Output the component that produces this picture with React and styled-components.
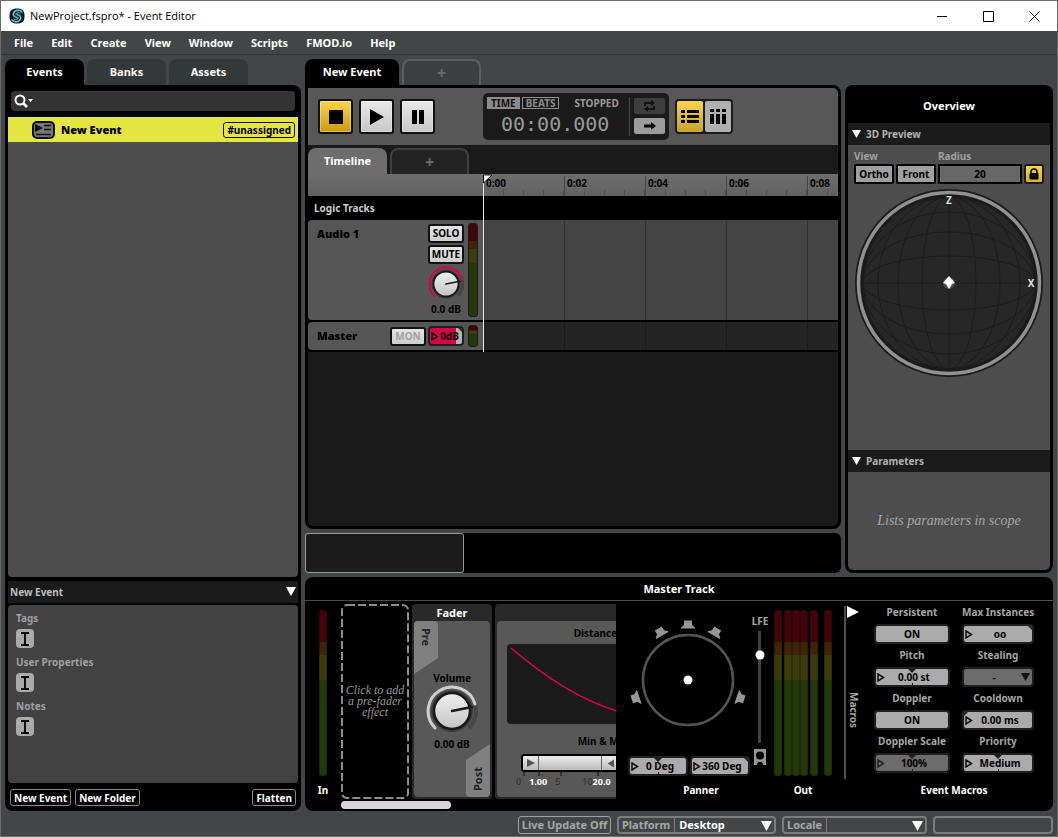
import { useState } from "react"
import styled, { createGlobalStyle, css } from "styled-components"

const TICK = 81
const meters = [0, 2, 0, 0, 2, 6]
const times = ["0:00", "0:02", "0:04", "0:06", "0:08"]
const speakers = [0, -30, 30, -109, 109]

function Knob({ size, color }) {
  return (
    <svg width={size} height={size} viewBox="-26 -26 52 52" role="img" aria-label="Volume knob">
      <defs>
        <linearGradient id="dial" x1="0" y1="0" x2="0" y2="1">
          <stop offset="0" stopColor="#f0f0f0" />
          <stop offset="1" stopColor="#c4c4c4" />
        </linearGradient>
      </defs>
      <path d="M17 17A24 24 0 0 0 23 -7" fill="none" stroke="#454545" strokeWidth="4" />
      <path d="M-17 17A24 24 0 1 1 23 -7" fill="none" stroke={color} strokeWidth="3" strokeLinecap="round" />
      <circle r="21" fill="#3c3c3c" />
      <circle r="18" fill="url(#dial)" stroke="#191919" strokeWidth="2.5" />
      <path d="M0 0L20 -4" stroke="#191919" strokeWidth="2.5" strokeLinecap="round" />
    </svg>
  )
}

function Triangle({ dir = "down", color = "#fff", size = 9 }) {
  const points = dir === "down" ? "0,0 10,0 5,9" : "0,0 10,5 0,10"
  return (
    <svg width={size} height={size} viewBox="0 0 10 10" aria-hidden="true">
      <polygon points={points} fill={color} />
    </svg>
  )
}

function DragField({ label, value, center, corner, level, dim, width, hideLabel }) {
  return (
    <FieldLabel $width={width}>
      {!hideLabel && <span>{label}</span>}
      <FieldBox $dim={dim} $level={level}>
        <svg width="8" height="9" viewBox="0 0 8 9" aria-hidden="true">
          <path d="M1 1L6.500 4.500L1 8Z" fill="none" stroke={dim ? "#222" : "#111"} strokeWidth="1.500" />
        </svg>
        <input aria-label={label} defaultValue={value} />
        {center && <Notch />}
        {corner && <Corner $side={corner} />}
      </FieldBox>
    </FieldLabel>
  )
}

function Sphere() {
  return (
    <SphereSvg viewBox="-95 -95 190 190" role="img" aria-label="3D preview">
      <circle r="94" fill="#1b1b1b" />
      <circle r="90.500" fill="#1b1b1b" stroke="#919191" strokeWidth="3.500" />
      <circle r="86" fill="#272727" />
      <g fill="none" stroke="#1c1c1c" strokeWidth="1">
        {[27, 51, 71, 86].map(r => (
          <g key={r}>
            <ellipse rx={r} ry="86" />
            <ellipse rx="86" ry={r} />
          </g>
        ))}
        <path d="M0 -86V86M-86 0H86" />
      </g>
      <circle r="6" fill="#4a4a4a" />
      <path d="M0 -7L6 0L3 1L0 6L-3 1L-6 0Z" fill="#fff" />
      <text x="0" y="-79" textAnchor="middle">Z</text>
      <text x="82" y="4" textAnchor="middle">X</text>
    </SphereSvg>
  )
}

function TitleBar() {
  return (
    <Title>
      <svg width="16" height="16" viewBox="0 0 16 16" aria-hidden="true">
        <rect x="0.500" y="0.500" width="15" height="15" rx="6" fill="#0c1a20" />
        <g fill="none" strokeWidth="1.500" strokeLinecap="round">
          <path d="M13 4C11 1.500 6 1.500 4.500 5C3.500 8 6 9 8 9.500" stroke="#5fc8e6" />
          <path d="M3 12C5 14.500 10 14.500 11.500 11C12.500 8 10 7 8 6.500" stroke="#5fc8e6" />
          <path d="M11 5C9.500 4 7.500 4.500 7 6.500M5 11C6.500 12 8.500 11.500 9 9.500" stroke="#2f93ad" />
        </g>
      </svg>
      <h1>NewProject.fspro* - Event Editor</h1>
      <WindowButton aria-label="Minimize"><svg width="11" height="11"><path d="M0 5.500H10" /></svg></WindowButton>
      <WindowButton aria-label="Maximize"><svg width="11" height="11"><path d="M.5 .5H10.500V10.500H.5Z" /></svg></WindowButton>
      <WindowButton aria-label="Close"><svg width="11" height="11"><path d="M.5 .5L10.500 10.500M10.500 .5L.5 10.500" /></svg></WindowButton>
    </Title>
  )
}

function Browser() {
  return (
    <BrowserColumn>
      <Tabs>
        <Tab $active>Events</Tab>
        <Tab>Banks</Tab>
        <Tab>Assets</Tab>
      </Tabs>
      <BrowserPanel>
        <Search>
          <svg width="20" height="14" viewBox="0 0 20 14" aria-hidden="true">
            <circle cx="6" cy="6" r="4.500" fill="none" stroke="#fff" strokeWidth="2" />
            <path d="M9.500 9.500L13 13" stroke="#fff" strokeWidth="2.500" />
            <path d="M14 5H19L16.500 8Z" fill="#fff" />
          </svg>
          <input aria-label="Search events" />
        </Search>
        <EventList>
          <EventRow>
            <svg width="23" height="18" viewBox="0 0 23 18" aria-hidden="true">
              <rect x="1" y="1" width="21" height="16" rx="4" fill="#777" stroke="#111" strokeWidth="2" />
              <path d="M3 3L11 7L3 11Z" fill="#111" />
              <path d="M12 4.500H19M12 8.500H19M4 13.500H19" stroke="#111" strokeWidth="1.500" />
            </svg>
            <strong>New Event</strong>
            <Tag>#unassigned</Tag>
          </EventRow>
        </EventList>
        <DetailsHeader>
          <span>New Event</span>
          <Triangle size={10} />
        </DetailsHeader>
        <Details>
          {["Tags", "User Properties", "Notes"].map(name => (
            <div key={name}>
              <span>{name}</span>
              <button aria-label={"Edit " + name}>
                <svg width="10" height="14" viewBox="0 0 10 14" aria-hidden="true">
                  <path d="M1 1H4L5 2L6 1H9M5 2V12M1 13H4L5 12L6 13H9" fill="none" stroke="#000" strokeWidth="1.800" />
                </svg>
              </button>
            </div>
          ))}
        </Details>
        <BrowserFooter>
          <OutlineButton>New Event</OutlineButton>
          <OutlineButton>New Folder</OutlineButton>
          <OutlineButton>Flatten</OutlineButton>
        </BrowserFooter>
      </BrowserPanel>
    </BrowserColumn>
  )
}

function Transport() {
  return (
    <Toolbar>
      <Buttons>
        <TransportButton $on aria-label="Stop"><svg width="14" height="14"><rect width="14" height="14" /></svg></TransportButton>
        <TransportButton aria-label="Play"><svg width="14" height="16"><path d="M0 0L14 8L0 16Z" /></svg></TransportButton>
        <TransportButton aria-label="Pause"><svg width="12" height="14"><path d="M0 0H5V14H0ZM7 0H12V14H7Z" /></svg></TransportButton>
      </Buttons>
      <Display>
        <Readout>
          <div>
            <Mode $on>TIME</Mode>
            <Mode>BEATS</Mode>
            <span>STOPPED</span>
          </div>
          <time>00:00.000</time>
        </Readout>
        <LoopButtons>
          <LoopButton aria-label="Loop">
            <svg width="13" height="12" viewBox="0 0 13 12">
              <path d="M2 6V3H9M11 6V9H4" fill="none" stroke="#111" strokeWidth="2" />
              <path d="M8 0L12 3L8 6ZM5 6L1 9L5 12Z" fill="#111" />
            </svg>
          </LoopButton>
          <LoopButton $on aria-label="Follow playhead">
            <svg width="12" height="8" viewBox="0 0 12 8"><path d="M0 2.500H7V0L12 4L7 8V5.500H0Z" /></svg>
          </LoopButton>
        </LoopButtons>
      </Display>
      <ViewToggle>
        <ViewButton $on aria-label="Track view">
          <svg width="18" height="13"><path d="M0 0H4V3H0ZM6 0H18V3H6ZM0 5H4V8H0ZM6 5H18V8H6ZM0 10H4V13H0ZM6 10H18V13H6Z" /></svg>
        </ViewButton>
        <ViewButton aria-label="Mixer view">
          <svg width="16" height="15"><path d="M0 0H4V3H0ZM6 0H10V3H6ZM12 0H16V3H12ZM0 5H4V15H0ZM6 5H10V15H6ZM12 5H16V15H12Z" /></svg>
        </ViewButton>
      </ViewToggle>
    </Toolbar>
  )
}

function Editor() {
  return (
    <EditorColumn>
      <Tabs>
        <Tab $active $wide>New Event</Tab>
        <AddTab aria-label="Add event tab">+</AddTab>
      </Tabs>
      <EditorPanel>
        <Transport />
        <SheetTabs>
          <SheetTab>Timeline</SheetTab>
          <AddTab $dark aria-label="Add sheet">+</AddTab>
        </SheetTabs>
        <TrackArea>
          <Playhead aria-hidden="true" />
          <PlayheadFlag width="10" height="10" aria-hidden="true"><path d="M.5 1H9L.5 9Z" fill="#fff" stroke="#111" /></PlayheadFlag>
          <RulerRow>
            <Ruler>{times.map(t => <span key={t}>{t}</span>)}</Ruler>
          </RulerRow>
          <LogicRow>Logic Tracks</LogicRow>
          <TrackRow>
            <TrackHead>
              <strong>Audio 1</strong>
              <TrackControls>
                <SmallButton>SOLO</SmallButton>
                <SmallButton>MUTE</SmallButton>
                <Knob size={36} color="#dc0046" />
                <span>0.0 dB</span>
              </TrackControls>
              <TrackMeter $height={94} />
            </TrackHead>
            <Lane />
          </TrackRow>
          <TrackRow>
            <TrackHead $master>
              <strong>Master</strong>
              <SmallButton disabled>MON</SmallButton>
              <DragField label="Master volume" value="0dB" corner="right" level width={36} hideLabel />
              <TrackMeter $height={22} />
            </TrackHead>
            <Lane $dark />
          </TrackRow>
        </TrackArea>
      </EditorPanel>
      <Minimap><div /></Minimap>
    </EditorColumn>
  )
}

function Overview() {
  return (
    <OverviewPanel>
      <h2>Overview</h2>
      <SectionHeader><Triangle />3D Preview</SectionHeader>
      <Preview>
        <PreviewControls>
          <div>
            <span>View</span>
            <ViewChoice>Ortho</ViewChoice>
            <ViewChoice>Front</ViewChoice>
          </div>
          <label>
            <span>Radius</span>
            <input defaultValue="20" />
          </label>
          <LockButton aria-label="Lock radius">
            <svg width="10" height="12" viewBox="0 0 10 12">
              <path d="M2 6V4A3 3 0 0 1 8 4V6" fill="none" stroke="#000" strokeWidth="1.600" />
              <rect x="0.500" y="5" width="9" height="6.500" rx="1" />
            </svg>
          </LockButton>
        </PreviewControls>
        <Sphere />
      </Preview>
      <SectionHeader><Triangle />Parameters</SectionHeader>
      <Parameters>Lists parameters in scope</Parameters>
    </OverviewPanel>
  )
}

function Modules() {
  return (
    <ModuleScroller>
      <ModuleList>
        <DropZone>
          <svg aria-hidden="true"><rect x="1" y="1" rx="5" /></svg>
          Click to add a pre-fader effect
        </DropZone>
        <Module>
          <h3>Fader</h3>
          <FaderBody>
            <PreTab>Pre</PreTab>
            <FaderDial>
              <span>Volume</span>
              <Knob size={52} color="#cfcfcf" />
              <span>0.00 dB</span>
            </FaderDial>
            <PostTab><span>Post</span></PostTab>
          </FaderBody>
        </Module>
        <Module $wide>
          <h3>&nbsp;</h3>
          <SpatialBody>
            <span>Distance Attenuation</span>
            <svg width="240" height="80" aria-hidden="true">
              <rect width="240" height="80" rx="4" fill="#1b1b1b" />
              <path d="M4 4Q60 52 110 67T236 78" fill="none" stroke="#e60050" strokeWidth="1.500" />
            </svg>
            <span>Min &amp; Max Distance</span>
            <RangeBar>
              <i><Triangle dir="right" size={8} color="#555" /></i>
              <b />
              <i><svg width="8" height="9" viewBox="0 0 10 10"><polygon points="10,0 10,10 2,5" fill="#555" /></svg></i>
              <b />
            </RangeBar>
            <ScaleTicks width="210" height="4" aria-hidden="true">
              <path d="M2 0V4M17 0V4M39 0V4M76 0V4" stroke="#333" strokeWidth="2" />
            </ScaleTicks>
            <Scale>
              <span>0</span><em>1.00</em><span>5</span><span>10</span><em>20.0</em>
            </Scale>
          </SpatialBody>
        </Module>
      </ModuleList>
      <Scrollbar />
    </ModuleScroller>
  )
}

function Panner() {
  return (
    <PannerColumn>
      <PannerTop>
        <svg width="120" height="128" viewBox="-60 -64 120 128" role="img" aria-label="Surround panner">
          <circle r="45" fill="none" stroke="#545454" strokeWidth="2.500" />
          <circle r="4.500" fill="#fff" />
          {speakers.map(a => (
            <path key={a} transform={`rotate(${a})`} d="M-4 -59.500H4V-55L7 -52.500V-51.500H-7V-52.500L-4 -55Z" fill="#969696" />
          ))}
        </svg>
        <Lfe>
          <span>LFE</span>
          <svg width="14" height="138" viewBox="0 0 14 138" aria-hidden="true">
            <path d="M6.500 4V116" stroke="#424242" strokeWidth="3" />
            <circle cx="7" cy="28" r="4.500" fill="#fff" />
            <path d="M1 122H13V138H10L9 135H5L4 138H1Z" fill="#969696" />
            <circle cx="7" cy="128.500" r="4" fill="#000" />
          </svg>
        </Lfe>
      </PannerTop>
      <PannerFields>
        <DragField label="Direction" value="0 Deg" center width={60} hideLabel />
        <DragField label="Extent" value="360 Deg" corner="right" width={60} hideLabel />
      </PannerFields>
      <Caption>Panner</Caption>
    </PannerColumn>
  )
}

function Macros() {
  const [persistent, setPersistent] = useState(true)
  const [doppler, setDoppler] = useState(true)

  return (
    <MacroColumn>
      <MacroToggle aria-label="Collapse macros">
        <Triangle dir="right" size={12} />
        <span>Macros</span>
      </MacroToggle>
      <div>
        <MacroGrid>
          <FieldLabel>
            <span>Persistent</span>
            <ToggleButton onClick={() => setPersistent(!persistent)}>{persistent ? "ON" : "OFF"}</ToggleButton>
          </FieldLabel>
          <DragField label="Max Instances" value="oo" corner="right" />
          <DragField label="Pitch" value="0.00 st" center />
          <FieldLabel>
            <span>Stealing</span>
            <SelectBox>
              <select><option>-</option></select>
              <Triangle color="#111" />
            </SelectBox>
          </FieldLabel>
          <FieldLabel>
            <span>Doppler</span>
            <ToggleButton onClick={() => setDoppler(!doppler)}>{doppler ? "ON" : "OFF"}</ToggleButton>
          </FieldLabel>
          <DragField label="Cooldown" value="0.00 ms" corner="left" />
          <DragField label="Doppler Scale" value="100%" center dim />
          <DragField label="Priority" value="Medium" center />
        </MacroGrid>
        <Caption>Event Macros</Caption>
      </div>
    </MacroColumn>
  )
}

export default function App() {
  return (
    <Window>
      <GlobalStyle />
      <TitleBar />
      <Menu>
        {["File", "Edit", "Create", "View", "Window", "Scripts", "FMOD.io", "Help"].map(item => (
          <button key={item}>{item}</button>
        ))}
      </Menu>
      <Body>
        <Browser />
        <MainColumn>
          <TopRow>
            <Editor />
            <Overview />
          </TopRow>
          <Dock>
            <h2>Master Track</h2>
            <DockBody>
              <InColumn>
                <Meter />
                <Caption>In</Caption>
              </InColumn>
              <Modules />
              <Panner />
              <OutColumn>
                <div>{meters.map((gap, i) => <Meter key={i} $gap={gap} />)}</div>
                <Caption>Out</Caption>
              </OutColumn>
              <Macros />
            </DockBody>
          </Dock>
        </MainColumn>
      </Body>
      <StatusBar>
        <LiveButton>Live Update Off</LiveButton>
        <StatusSelect $width={159}>
          <span>Platform</span>
          <select><option>Desktop</option></select>
          <Triangle size={11} />
        </StatusSelect>
        <StatusSelect $width={145}>
          <span>Locale</span>
          <select><option></option></select>
          <Triangle size={11} />
        </StatusSelect>
        <StatusBox />
      </StatusBar>
    </Window>
  )
}

const GlobalStyle = createGlobalStyle`
  * {
    box-sizing: border-box;
  }
  body {
    margin: 0;
  }
  body, button, input, select {
    font: bold 10px/14px "Noto Sans", sans-serif;
  }
  button, input, select {
    margin: 0;
    padding: 0;
    border: 0;
    border-radius: 0;
    color: inherit;
    background: none;
    appearance: none;
    min-width: 0;
    outline: none;
  }
  h1, h2, h3 {
    margin: 0;
  }
  svg {
    display: block;
    flex-shrink: 0;
  }
`
const Window = styled.div`
  display: flex;
  flex-direction: column;
  min-height: 100vh;
  border: 1px solid #6b6b6b;
  background: #434646;
  color: #fff;
`
const Title = styled.header`
  display: flex;
  align-items: center;
  height: 30px;
  padding-left: 8px;
  background: #fff;
  color: #000;
  h1 {
    flex: 1;
    margin-left: 5px;
    font: 11px/16px "Open Sans", sans-serif;
  }
`
const WindowButton = styled.button`
  display: flex;
  align-items: center;
  justify-content: center;
  width: 46px;
  height: 30px;
  path {
    fill: none;
    stroke: #000;
  }
`
const Menu = styled.nav`
  display: flex;
  gap: 18px;
  height: 24px;
  padding: 0 13px;
  border-bottom: 1px solid #303333;
  button {
    font-size: 11px;
  }
`
const Body = styled.main`
  flex: 1;
  display: flex;
  gap: 4px;
  padding: 4px 4px 0;
`
const BrowserColumn = styled.section`
  display: flex;
  flex-direction: column;
  width: 296px;
  flex-shrink: 0;
`
const Tabs = styled.div`
  display: flex;
  gap: 3px;
  height: 26px;
`
const Tab = styled.button`
  width: ${(props) => (props.$wide ? 94 : 79)}px;
  border-radius: 8px 8px 0 0;
  font-size: 11px;
  background: ${(props) => (props.$active ? "#000" : "#353838")};
`
const AddTab = styled.button`
  width: 79px;
  border: 2px solid ${(props) => (props.$dark ? "#404040" : "#5c5f5f")};
  border-bottom: 0;
  border-radius: 8px 8px 0 0;
  background: ${(props) => (props.$dark ? "#232323" : "#3c3f3f")};
  color: #6c6c6c;
  font-size: 16px;
`
const BrowserPanel = styled.div`
  flex: 1;
  display: flex;
  flex-direction: column;
  padding: 3px;
  border-radius: 0 8px 8px 8px;
  background: #000;
`
const Search = styled.div`
  display: flex;
  align-items: center;
  height: 20px;
  margin: 3px 3px 6px;
  padding: 0 3px;
  border-radius: 4px;
  background: #333;
  input {
    flex: 1;
  }
`
const EventList = styled.div`
  flex: 1;
  border-radius: 0 0 4px 4px;
  background: #4d4d4d;
`
const EventRow = styled.div`
  display: flex;
  align-items: center;
  gap: 6px;
  height: 25px;
  padding: 0 3px 0 24px;
  background: #e6e642;
  color: #000;
  strong {
    flex: 1;
    font-size: 11px;
  }
`
const Tag = styled.span`
  padding: 0 3px;
  border: 1px solid #111;
  border-radius: 3px;
`
const DetailsHeader = styled.div`
  display: flex;
  align-items: center;
  justify-content: space-between;
  height: 22px;
  margin: 4px 0 2px;
  padding: 0 2px;
  background: #1b1b1b;
  color: #bdbdbd;
`
const Details = styled.div`
  display: flex;
  flex-direction: column;
  gap: 7px;
  height: 178px;
  padding: 6px 8px;
  border-radius: 4px;
  background: #424242;
  color: #a0a0a0;
  div {
    display: flex;
    flex-direction: column;
    gap: 4px;
  }
  button {
    display: flex;
    align-items: center;
    justify-content: center;
    width: 18px;
    height: 19px;
    border-radius: 4px;
    background: #aaa;
  }
`
const BrowserFooter = styled.div`
  display: flex;
  gap: 4px;
  padding: 6px 2px 2px;
  button:last-child {
    margin-left: auto;
  }
`
const OutlineButton = styled.button`
  height: 17px;
  padding: 0 3px;
  border: 1px solid #8a8a8a;
  border-radius: 3px;
`
const MainColumn = styled.div`
  flex: 1;
  min-width: 0;
  display: flex;
  flex-direction: column;
  gap: 4px;
`
const TopRow = styled.div`
  flex: 1;
  display: flex;
  gap: 4px;
`
const EditorColumn = styled.section`
  flex: 1;
  min-width: 0;
  display: flex;
  flex-direction: column;
`
const EditorPanel = styled.div`
  flex: 1;
  display: flex;
  flex-direction: column;
  border: 3px solid #000;
  border-radius: 0 8px 8px 8px;
  background: #1a1a1a;
  overflow: hidden;
`
const Toolbar = styled.div`
  display: flex;
  align-items: center;
  height: 57px;
  padding-left: 10px;
  background: #575757;
`
const Buttons = styled.div`
  display: flex;
  gap: 6px;
  width: 165px;
`
const TransportButton = styled.button`
  display: flex;
  align-items: center;
  justify-content: center;
  width: 35px;
  height: 35px;
  border: 2px solid #111;
  border-radius: 3px;
  box-shadow: inset 0 0 0 1px #ffffff50;
  background: ${(props) => (props.$on ? "linear-gradient(#fbd34c, #c99e0c)" : "linear-gradient(#e8e8e8, #c8c8c8)")};
`
const Display = styled.div`
  display: flex;
  height: 47px;
  padding: 4px;
  border-radius: 5px;
  background: #1b1b1b;
  color: #9a9a9a;
`
const Readout = styled.div`
  width: 143px;
  border-right: 1px solid #4a4a4a;
  div {
    display: flex;
    gap: 2px;
    line-height: 12px;
  }
  div span:last-child {
    margin-left: 13px;
  }
  time {
    display: block;
    margin-left: 14px;
    font: 20px/30px "DejaVu Sans Mono", monospace;
  }
`
const Mode = styled.button`
  height: 12px;
  padding: 0 3px;
  border: 1px solid #8c8c8c;
  line-height: 10px;
  background: ${(props) => (props.$on ? "#8c8c8c" : "none")};
  color: ${(props) => (props.$on ? "#111" : "#8c8c8c")};
`
const LoopButtons = styled.div`
  display: flex;
  flex-direction: column;
  gap: 4px;
  padding: 1px 0 0 4px;
`
const LoopButton = styled.button`
  display: flex;
  align-items: center;
  justify-content: center;
  width: 31px;
  height: 16px;
  border-radius: 2px;
  background: ${(props) => (props.$on ? "#9c9c9c" : "#3e3e3e")};
`
const ViewToggle = styled.div`
  display: flex;
  gap: 2px;
  margin-left: 6px;
  padding: 2px;
  border-radius: 4px;
  background: #1b1b1b;
`
const ViewButton = styled.button`
  display: flex;
  align-items: center;
  justify-content: center;
  width: 26px;
  height: 31px;
  border-radius: 2px;
  background: ${(props) => (props.$on ? "linear-gradient(#fbd34c, #c9a22c)" : "#b0b0b0")};
`
const SheetTabs = styled.div`
  display: flex;
  gap: 3px;
  height: 29px;
  padding-top: 3px;
`
const SheetTab = styled.button`
  width: 79px;
  border-radius: 8px 8px 0 0;
  background: #6d6d6d;
  font-size: 11px;
`
const TrackArea = styled.div`
  position: relative;
  background: #000;
`
const Playhead = styled.div`
  position: absolute;
  top: 2px;
  bottom: 0;
  left: 175px;
  width: 1px;
  background: #e6e6e6;
`
const PlayheadFlag = styled.svg`
  position: absolute;
  top: 0;
  left: 175px;
`
const RulerRow = styled.div`
  height: 22px;
  padding-left: 175px;
  background: linear-gradient(#6d6d6d, #626262);
`
const Ruler = styled.div`
  display: flex;
  height: 22px;
  padding-top: 2px;
  overflow: hidden;
  color: #000;
  background:
    repeating-linear-gradient(90deg, #444 0 1px, transparent 1px ${TICK}px) 0 2px / 100% 22px no-repeat,
    repeating-linear-gradient(90deg, #505050 0 1px, transparent 1px 20px) 0 16px / ${TICK}px 6px repeat-x;
  span {
    flex: 0 0 ${TICK}px;
    padding-left: 3px;
  }
`
const LogicRow = styled.div`
  height: 24px;
  padding: 5px 6px;
  color: #ccc;
`
const TrackRow = styled.div`
  display: flex;
  padding-bottom: 2px;
`
const TrackHead = styled.div`
  display: flex;
  gap: ${(props) => (props.$master ? 2 : 4)}px;
  width: 175px;
  padding: 3px 5px 3px 9px;
  align-items: ${(props) => (props.$master ? "center" : "flex-start")};
  border-radius: 4px 0 0 4px;
  background: #565656;
  color: #000;
  > div:last-child {
    margin-left: ${(props) => (props.$master ? 2 : 0)}px;
  }
  strong {
    flex: 1;
    font-size: 11px;
    line-height: 22px;
  }
`
const TrackControls = styled.div`
  display: flex;
  flex-direction: column;
  align-items: center;
  gap: 2px;
  width: 36px;
  padding-top: 1px;
  white-space: nowrap;
  line-height: 10px;
`
const SmallButton = styled.button`
  width: 36px;
  height: 19px;
  flex-shrink: 0;
  border: 2px solid #111;
  border-radius: 3px;
  background: linear-gradient(#e6e6e6, #cdcdcd);
  color: #000;
  line-height: 13px;
  &:disabled {
    color: #a2a2a2;
  }
`
const meterColors = css`
  background: linear-gradient(#42060a 19%, #402408 19% 27%, #3c3c08 27% 42%, #213a08 42%);
`
const TrackMeter = styled.div`
  width: 10px;
  height: ${(props) => props.$height}px;
  flex-shrink: 0;
  border: 1px solid #1b1b1b;
  border-radius: 3px;
  ${meterColors}
`
const Lane = styled.div`
  flex: 1;
  background:
    repeating-linear-gradient(90deg, ${(props) => (props.$dark ? "#1b1b1b" : "#303030")} 0 1px, transparent 1px ${TICK}px),
    ${(props) => (props.$dark ? "#242424" : "#444")};
`
const Minimap = styled.div`
  height: 40px;
  margin-top: 4px;
  border-radius: 6px;
  background: #000;
  div {
    width: 159px;
    height: 100%;
    border: 1px solid #9a9a9a;
    border-radius: 3px;
    background: #1b1b1b;
  }
`
const OverviewPanel = styled.aside`
  display: flex;
  flex-direction: column;
  width: 208px;
  margin-top: 26px;
  padding: 0 3px 3px;
  border-radius: 8px;
  background: #000;
  h2 {
    height: 38px;
    font-size: 11px;
    line-height: 42px;
    text-align: center;
  }
`
const SectionHeader = styled.h3`
  display: flex;
  align-items: center;
  gap: 5px;
  height: 22px;
  padding-left: 4px;
  background: #1b1b1b;
  color: #b2b2b2;
  font-size: 10px;
`
const Preview = styled.div`
  flex: 1;
  padding: 4px 6px;
  background: #4d4d4d;
`
const PreviewControls = styled.div`
  display: flex;
  align-items: flex-end;
  gap: 2px;
  color: #a0a0a0;
  div {
    display: grid;
    grid-template-columns: 40px 40px;
    gap: 1px 2px;
  }
  div > span {
    grid-column: span 2;
  }
  label {
    display: flex;
    flex-direction: column;
    gap: 1px;
    flex: 1;
    min-width: 0;
  }
  input {
    width: 100%;
    height: 20px;
    border: 2px solid #000;
    background: #686868;
    color: #000;
    text-align: center;
  }
`
const ViewChoice = styled.button`
  height: 20px;
  border: 2px solid #000;
  border-radius: 2px;
  background: #a0a0a0;
  color: #000;
`
const LockButton = styled.button`
  display: flex;
  align-items: center;
  justify-content: center;
  width: 20px;
  height: 20px;
  border: 2px solid #1b1b1b;
  border-radius: 3px;
  background: linear-gradient(#fbd34c, #d9b02c);
`
const SphereSvg = styled.svg`
  width: 190px;
  height: 190px;
  margin: 4px auto 0;
  fill: #ddd;
`
const Parameters = styled.div`
  display: flex;
  align-items: center;
  justify-content: center;
  height: 98px;
  border-radius: 0 0 5px 5px;
  background: #4d4d4d;
  color: #a6a6a6;
  font: italic 14px/18px "Liberation Serif", serif;
`
const Dock = styled.section`
  border-radius: 8px;
  background: #000;
  h2 {
    height: 24px;
    border-bottom: 1px solid #4a4a4a;
    font-size: 11px;
    line-height: 24px;
    text-align: center;
  }
`
const DockBody = styled.div`
  display: flex;
  height: 210px;
`
const Caption = styled.div`
  line-height: 14px;
  text-align: center;
`
const Meter = styled.div`
  width: 8px;
  height: 166px;
  margin-left: ${(props) => props.$gap || 0}px;
  border-radius: 3px;
  box-shadow: inset 0 0 0 1px #00000040;
  ${meterColors}
`
const InColumn = styled.div`
  display: flex;
  flex-direction: column;
  align-items: center;
  gap: 7px;
  width: 36px;
  padding-top: 9px;
`
const ModuleScroller = styled.div`
  flex: 1;
  min-width: 0;
  padding-top: 3px;
  overflow: hidden;
`
const ModuleList = styled.div`
  display: flex;
  gap: 3px;
  height: 195px;
`
const Scrollbar = styled.div`
  width: 110px;
  height: 8px;
  margin-top: 2px;
  border-radius: 4px;
  background: #d6d6d6;
`
const DropZone = styled.button`
  position: relative;
  flex: 0 0 68px;
  padding: 0 2px;
  color: #969696;
  font: italic 12px/11px "Liberation Serif", serif;
  svg {
    position: absolute;
    inset: 0;
    width: 100%;
    height: 100%;
  }
  rect {
    width: calc(100% - 2px);
    height: calc(100% - 2px);
    fill: none;
    stroke: #8c8c8c;
    stroke-width: 2;
    stroke-dasharray: 8 3;
  }
`
const Module = styled.div`
  display: flex;
  flex-direction: column;
  flex: 0 0 ${(props) => (props.$wide ? 264 : 80)}px;
  padding: 0 2px 2px;
  border-radius: 4px;
  background: #292929;
  h3 {
    font-size: 11px;
    line-height: 17px;
    text-align: center;
  }
`
const FaderBody = styled.div`
  flex: 1;
  display: flex;
  flex-direction: column;
  justify-content: space-between;
  border-radius: 4px;
  background: #585858;
  color: #000;
`
const PreTab = styled.button`
  width: 24px;
  height: 53px;
  padding: 7px 5px;
  border-radius: 4px 4px 0 0;
  background: #808080;
  clip-path: polygon(0 0, 100% 0, 100% 70%, 0 100%);
  color: #222;
  font-size: 11px;
  text-align: left;
  writing-mode: vertical-rl;
`
const PostTab = styled.button`
  align-self: flex-end;
  width: 24px;
  height: 53px;
  padding: 6px 5px;
  border-radius: 0 0 4px 4px;
  background: #808080;
  clip-path: polygon(0 30%, 100% 0, 100% 100%, 0 100%);
  color: #222;
  font-size: 11px;
  text-align: right;
  writing-mode: vertical-rl;
  span {
    display: inline-block;
    transform: rotate(180deg);
  }
`
const FaderDial = styled.div`
  display: flex;
  flex-direction: column;
  align-items: center;
  margin: -6px 0 -9px;
`
const SpatialBody = styled.div`
  flex: 1;
  display: flex;
  flex-direction: column;
  align-items: center;
  padding-top: 5px;
  border-radius: 4px;
  background: #585858;
  color: #000;
  > svg {
    margin: 4px 0 10px;
  }
`
const RangeBar = styled.div`
  display: flex;
  width: 212px;
  height: 18px;
  margin-top: 6px;
  border: 2px solid #000;
  border-radius: 3px;
  background: linear-gradient(#eee, #bbb);
  i {
    display: flex;
    align-items: center;
    justify-content: center;
    width: 16px;
    border-right: 1px solid #666;
  }
  b {
    width: 63px;
    border-right: 1px solid #666;
  }
`
const ScaleTicks = styled.svg`
  && {
    margin: 0;
  }
`
const Scale = styled.div`
  display: flex;
  width: 222px;
  gap: 8px;
  color: #2d2d2d;
  font-size: 9px;
  font-weight: 400;
  line-height: 12px;
  em {
    color: #fff;
    font-style: normal;
    font-weight: 700;
  }
  span:nth-child(4) {
    margin-left: 14px;
  }
  em:last-child {
    margin-left: -8px;
  }
`
const PannerColumn = styled.div`
  width: 158px;
  padding-left: 12px;
`
const PannerTop = styled.div`
  display: flex;
  height: 155px;
  padding-top: 15px;
`
const Lfe = styled.div`
  display: flex;
  flex-direction: column;
  align-items: center;
  width: 24px;
  color: #a6a6a6;
  margin-top: -2px;
  svg {
    margin-top: -1px;
  }
`
const PannerFields = styled.div`
  display: flex;
  gap: 2px;
  height: 27px;
`
const OutColumn = styled.div`
  width: 70px;
  padding-top: 9px;
  ${Caption} {
    width: 58px;
    margin-top: 7px;
  }
  div:first-child {
    display: flex;
  }
`
const MacroColumn = styled.div`
  display: flex;
  padding-right: 19px;
`
const MacroToggle = styled.button`
  display: flex;
  flex-direction: column;
  align-items: flex-start;
  gap: 74px;
  width: 30px;
  height: 173px;
  margin-top: 5px;
  padding-left: 1px;
  border-left: 2px solid #4d4d4d;
  color: #a6a6a6;
  span {
    writing-mode: vertical-rl;
  }
`
const MacroGrid = styled.div`
  display: grid;
  grid-template-columns: 76px 72px;
  gap: 4px 12px;
  margin: 4px 0 10px;
`
const FieldLabel = styled.label`
  display: flex;
  flex-direction: column;
  gap: 5px;
  width: ${(props) => (props.$width ? props.$width + "px" : "auto")};
  color: #a6a6a6;
  text-align: center;
  white-space: nowrap;
`
const FieldBox = styled.div`
  position: relative;
  height: 20px;
  border: 2px solid #1f1f1f;
  border-radius: 4px;
  background: ${(props) => {
    if (props.$level) return "linear-gradient(90deg, #dc0046 80%, #b4b4b4 80%)"
    return props.$dim ? "#6c6c6c" : "#ababab"
  }};
  overflow: hidden;
  svg {
    position: absolute;
    top: 4px;
    left: 1px;
  }
  input {
    display: block;
    width: 100%;
    height: 16px;
    padding-left: ${(props) => (props.$level ? 7 : 4)}px;
    color: #000;
    text-align: center;
  }
`
const Notch = styled.i`
  position: absolute;
  top: 0;
  left: 50%;
  margin-left: -4px;
  border: 4px solid transparent;
  border-top-color: #1f1f1f;
  border-bottom: 0;
  &::after {
    content: "";
    position: absolute;
    top: 10px;
    width: 1px;
    height: 2px;
    background: #1f1f1f;
  }
`
const Corner = styled.i`
  position: absolute;
  top: 0;
  ${(props) => props.$side}: 0;
  border-top: 4px solid #1f1f1f;
  border-${(props) => (props.$side === "right" ? "left" : "right")}: 4px solid transparent;
`
const ToggleButton = styled.button`
  height: 20px;
  border: 2px solid #1f1f1f;
  border-radius: 4px;
  background: #ababab;
  color: #000;
`
const SelectBox = styled.div`
  position: relative;
  height: 20px;
  border: 2px solid #1f1f1f;
  border-radius: 4px;
  background: #6c6c6c;
  color: #000;
  select {
    width: 100%;
    height: 16px;
    padding-right: 8px;
    text-align-last: center;
  }
  svg {
    position: absolute;
    top: 4px;
    right: 2px;
  }
`
const StatusBar = styled.footer`
  display: flex;
  justify-content: flex-end;
  gap: 6px;
  padding: 5px 4px 2px;
  color: #a6a6a6;
  font-size: 11px;
`
const LiveButton = styled.button`
  width: 93px;
  height: 18px;
  border: 1px solid #a0a0a0;
  border-radius: 3px;
  font-size: 11px;
`
const StatusSelect = styled.label`
  position: relative;
  display: flex;
  width: ${(props) => props.$width}px;
  height: 18px;
  border: 2px solid #7c7c7c;
  border-radius: 4px;
  span {
    padding: 0 4px 0 3px;
    border-right: 1px solid #7c7c7c;
  }
  select {
    flex: 1;
    padding-left: 4px;
    color: #fff;
    font-size: 11px;
  }
  svg {
    position: absolute;
    top: 3px;
    right: 2px;
  }
`
const StatusBox = styled.div`
  width: 120px;
  height: 18px;
  border: 2px solid #7c7c7c;
  border-radius: 4px;
`
